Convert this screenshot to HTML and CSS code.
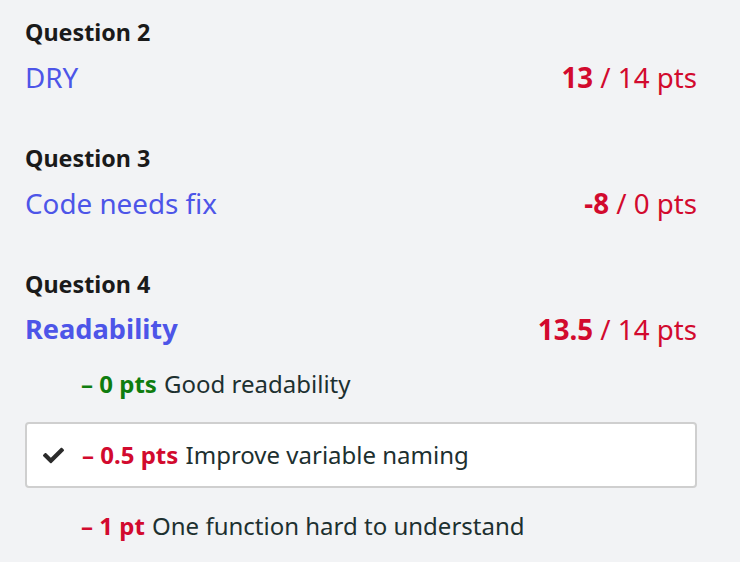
FILE: index.html
```html
<!DOCTYPE html>
<html>
<head>
<meta charset="utf-8">
<link rel="stylesheet" href="styles.css">
</head>
<body>
<div class="page">
  <section class="question">
    <div class="q-label">Question 2</div>
    <div class="q-row">
      <span class="q-title">DRY</span>
      <span class="q-score"><b>13</b> / 14 pts</span>
    </div>
  </section>
  <section class="question">
    <div class="q-label">Question 3</div>
    <div class="q-row">
      <span class="q-title">Code needs fix</span>
      <span class="q-score"><b>-8</b> / 0 pts</span>
    </div>
  </section>
  <section class="question">
    <div class="q-label">Question 4</div>
    <div class="q-row">
      <span class="q-title q-title-bold">Readability</span>
      <span class="q-score"><b>13.5</b> / 14 pts</span>
    </div>
    <ul class="rubric">
      <li class="item">
        <span class="pts pts-green">– 0 pts</span> <span class="desc">Good readability</span>
      </li>
      <li class="item item-selected">
        <svg class="check" viewBox="0 56 512 400" width="21" height="17" aria-hidden="true"><path d="M173.9 439.4l-166.4-166.4c-10-10-10-26.2 0-36.2l36.2-36.2c10-10 26.2-10 36.2 0L192 312.7 432.1 72.6c10-10 26.2-10 36.2 0l36.2 36.2c10 10 10 26.2 0 36.2l-294.4 294.4c-10 10-26.2 10-36.2 0z" fill="#2b2b2b"/></svg>
        <span class="text"><span class="pts pts-red">– 0.5 pts</span> <span class="desc">Improve variable naming</span></span>
      </li>
      <li class="item">
        <span class="pts pts-red">– 1 pt</span> <span class="desc">One function hard to understand</span>
      </li>
    </ul>
  </section>
</div>
</body>
</html>
```

FILE: styles.css
```css
html, body {
  margin: 0;
  padding: 0;
  background: #f2f3f5;
}
body {
  font-family: "Noto Sans", "DejaVu Sans", sans-serif;
  color: #1d3030;
}
.page {
  padding: 17px 43px 0 25px;
  display: flex;
  flex-direction: column;
  gap: 46px;
}
.q-label {
  font-size: 23.3px;
  font-weight: 700;
  line-height: 30px;
  color: #1a1a1a;
}
.q-row {
  margin-top: 10px;
  display: flex;
  justify-content: space-between;
  align-items: center;
  line-height: 40px;
}
.q-title {
  font-size: 27.8px;
  color: #4d55e8;
}
.q-title-bold {
  font-weight: 700;
  font-size: 27.2px;
}
.q-score {
  font-size: 27.7px;
  color: #d20a2e;
}
.q-score b {
  font-weight: 700;
}
.rubric {
  list-style: none;
  margin: 17px 0 0;
  padding: 0;
  display: flex;
  flex-direction: column;
  gap: 20px;
}
.item {
  font-size: 24px;
  line-height: 36px;
  padding-left: 56px;
  white-space: nowrap;
}
.desc {
  margin-left: 1px;
}
.item-selected {
  background: #fff;
  border: 2px solid #cfcfcf;
  border-radius: 4px;
  padding: 13px 16px;
  display: flex;
  align-items: center;
}
.check {
  margin-right: 18px;
  flex: none;
}
.pts {
  font-weight: 700;
}
.pts-green {
  color: #0f7d0f;
}
.pts-red {
  color: #d20a2e;
}
```
